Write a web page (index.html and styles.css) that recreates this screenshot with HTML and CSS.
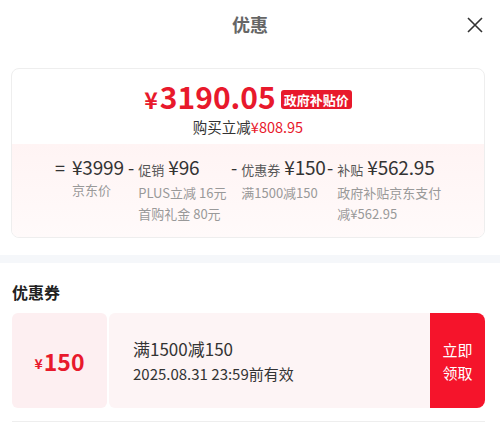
FILE: index.html
```html
<!DOCTYPE html>
<html lang="zh-CN">
<head>
    <meta charset="UTF-8">
    <meta name="viewport" content="width=device-width, initial-scale=1.0">
    <title>优惠</title>
    <link rel="stylesheet" href="styles.css">
</head>
<body>
    <div class="header">
        <h1 class="title">优惠</h1>
        <span class="close">
            <svg width="18" height="18" viewBox="0 0 18 18"><path d="M2 2L16 16M16 2L2 16" stroke="#333" stroke-width="1.6" fill="none"/></svg>
        </span>
    </div>

    <div class="price-card">
        <div class="price-top">
            <div class="price-line">
                <span class="final-price"><span class="yen">¥</span>3190.05</span>
                <span class="badge">政府补贴价</span>
            </div>
            <div class="save-line">购买立减<span class="red">¥808.95</span></div>
        </div>
        <div class="price-bottom">
            <div class="calc-col">
                <span class="op op-eq">=</span>
                <div class="calc-body">
                    <div class="amount">¥3999</div>
                    <div class="note note-indent">京东价</div>
                </div>
            </div>
            <div class="calc-col">
                <span class="op">-</span>
                <div class="calc-body">
                    <div class="amount"><span class="kind">促销</span> ¥96</div>
                    <div class="note">PLUS立减 16元</div>
                    <div class="note">首购礼金 80元</div>
                </div>
            </div>
            <div class="calc-col">
                <span class="op">-</span>
                <div class="calc-body">
                    <div class="amount"><span class="kind">优惠券</span> ¥150</div>
                    <div class="note">满1500减150</div>
                </div>
            </div>
            <div class="calc-col">
                <span class="op">-</span>
                <div class="calc-body">
                    <div class="amount"><span class="kind">补贴</span> ¥562.95</div>
                    <div class="note">政府补贴京东支付<br>减¥562.95</div>
                </div>
            </div>
        </div>
    </div>

    <div class="divider-band"></div>

    <div class="coupon-section">
        <h2 class="section-title">优惠券</h2>
        <div class="coupon">
            <div class="coupon-value"><span class="yen-small">¥</span>150</div>
            <div class="coupon-info">
                <div class="coupon-rule">满1500减150</div>
                <div class="coupon-date">2025.08.31 23:59前有效</div>
            </div>
            <button class="coupon-btn">立即<br>领取</button>
        </div>
        <div class="bottom-line"></div>
    </div>
</body>
</html>
```

FILE: styles.css
```css
body {
    margin: 0;
    padding: 0;
    background-color: #fff;
    font-family: "Noto Sans CJK SC", "Noto Sans", sans-serif;
    color: #333;
}

.header {
    position: relative;
    height: 68px;
    display: flex;
    justify-content: center;
}

.title {
    margin: 9px 0 0;
    font-size: 18px;
    font-weight: bold;
    color: #666;
    line-height: 30px;
}

.close {
    position: absolute;
    right: 16px;
    top: 15px;
}

.price-card {
    margin: 0 15px 0 11px;
    border: 1px solid #eee;
    border-radius: 8px;
    overflow: hidden;
}

.price-top {
    height: 75px;
    display: flex;
    flex-direction: column;
    align-items: center;
    padding-top: 9px;
    box-sizing: border-box;
}

.price-line {
    display: flex;
    align-items: center;
    gap: 5px;
    padding-left: 0;
    height: 38px;
}

.final-price {
    color: #e8192c;
    font-size: 30px;
    font-weight: bold;
    line-height: 38px;
}

.yen {
    font-size: 23px;
    margin-right: 2px;
}

.badge {
    background-color: #e8192c;
    color: #fff;
    font-size: 13px;
    font-weight: bold;
    padding: 0 3px;
    line-height: 19px;
    border-radius: 3px;
    margin-top: 4px;
}

.save-line {
    font-size: 14.5px;
    line-height: 20px;
    margin-top: 1px;
    padding-left: 0;
}

.red {
    color: #e8192c;
}

.price-bottom {
    height: 93px;
    background: linear-gradient(to bottom, #fff4f4, #fffafa);
    display: grid;
    grid-template-columns: 73px 103px 96px auto;
    padding: 11px 0 0 43px;
    box-sizing: border-box;
}

.calc-col {
    display: flex;
    align-items: flex-start;
}

.op {
    font-size: 18px;
    line-height: 24px;
    color: #333;
    margin-right: 4px;
}

.op-eq {
    margin-right: 7px;
}

.amount {
    font-size: 19px;
    line-height: 24px;
    color: #333;
    white-space: nowrap;
    letter-spacing: -0.2px;
}

.kind {
    font-size: 13px;
    color: #555;
    letter-spacing: 0;
}

.note {
    font-size: 13px;
    line-height: 21px;
    color: #999;
    white-space: nowrap;
}

.note-indent {
    padding-left: 0;
}

.divider-band {
    height: 8px;
    margin-top: 17px;
    background-color: #f5f7fa;
}

.coupon-section {
    padding: 0 15px 0 12px;
}

.section-title {
    margin: 0;
    padding-top: 17px;
    font-size: 16px;
    font-weight: bold;
    color: #222;
    line-height: 24px;
    height: 25px;
}

.coupon {
    margin-top: 8px;
    height: 95px;
    display: flex;
    gap: 2px;
}

.coupon-value {
    width: 95px;
    background-color: #fdeff1;
    border-radius: 6px;
    display: flex;
    align-items: center;
    justify-content: center;
    color: #e8192c;
    font-size: 23px;
    font-weight: bold;
}

.yen-small {
    font-size: 14px;
    margin-top: 4px;
    margin-right: 1px;
}

.coupon-info {
    flex: 1;
    background-color: #fdf4f5;
    border-radius: 6px 0 0 6px;
    padding-left: 24px;
    display: flex;
    flex-direction: column;
    justify-content: center;
}

.coupon-rule {
    font-size: 17px;
    line-height: 26px;
    color: #333;
}

.coupon-date {
    font-size: 15px;
    line-height: 24px;
    color: #333;
}

.coupon-btn {
    width: 55px;
    margin-left: -2px;
    border: none;
    background-color: #f5142b;
    color: #fff;
    font-family: inherit;
    font-size: 15px;
    line-height: 23px;
    border-radius: 0 8px 8px 0;
    padding: 0;
}

.bottom-line {
    height: 1px;
    margin-top: 13px;
    background-color: #eee;
}
```
